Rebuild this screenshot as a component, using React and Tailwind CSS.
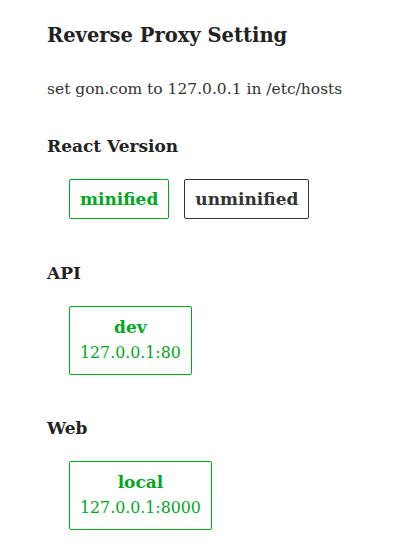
const Option = ({ label, sub, active }) => (
  <button
    className={`flex flex-col items-center rounded-[2px] border px-[10px] ${
      active ? 'border-[#00a81e] text-[#00a81e]' : 'border-[#333] text-[#333]'
    } ${sub ? 'py-[8px]' : 'h-[40px] justify-center'}`}
  >
    <span className="text-[17px] font-bold leading-[24px]">{label}</span>
    {sub && <span className="text-[15.8px] leading-[27px]">{sub}</span>}
  </button>
);

const Section = ({ title, children }) => (
  <div>
    <h3 className="text-[17px] font-bold leading-[24px] text-[#222]">{title}</h3>
    <div className="mt-[21px] flex gap-[15px] pl-[22px]">{children}</div>
  </div>
);

export default function App() {
  return (
    <div className="min-h-[558px] bg-white pl-[47px] pt-[22px] font-['DejaVu_Serif',serif] text-[#222]">
      <h1 className="text-[19.5px] font-bold leading-[28px]">Reverse Proxy Setting</h1>
      <p className="mt-[28px] text-[15.5px] leading-[22px] text-[#333]">
        set gon.com to 127.0.0.1 in /etc/hosts
      </p>

      <div className="mt-[34px]">
        <Section title="React Version">
          <Option label="minified" active />
          <Option label="unminified" />
        </Section>
      </div>

      <div className="mt-[42px]">
        <Section title="API">
          <Option label="dev" sub="127.0.0.1:80" active />
        </Section>
      </div>

      <div className="mt-[41px]">
        <Section title="Web">
          <Option label="local" sub="127.0.0.1:8000" active />
        </Section>
      </div>
    </div>
  );
}
